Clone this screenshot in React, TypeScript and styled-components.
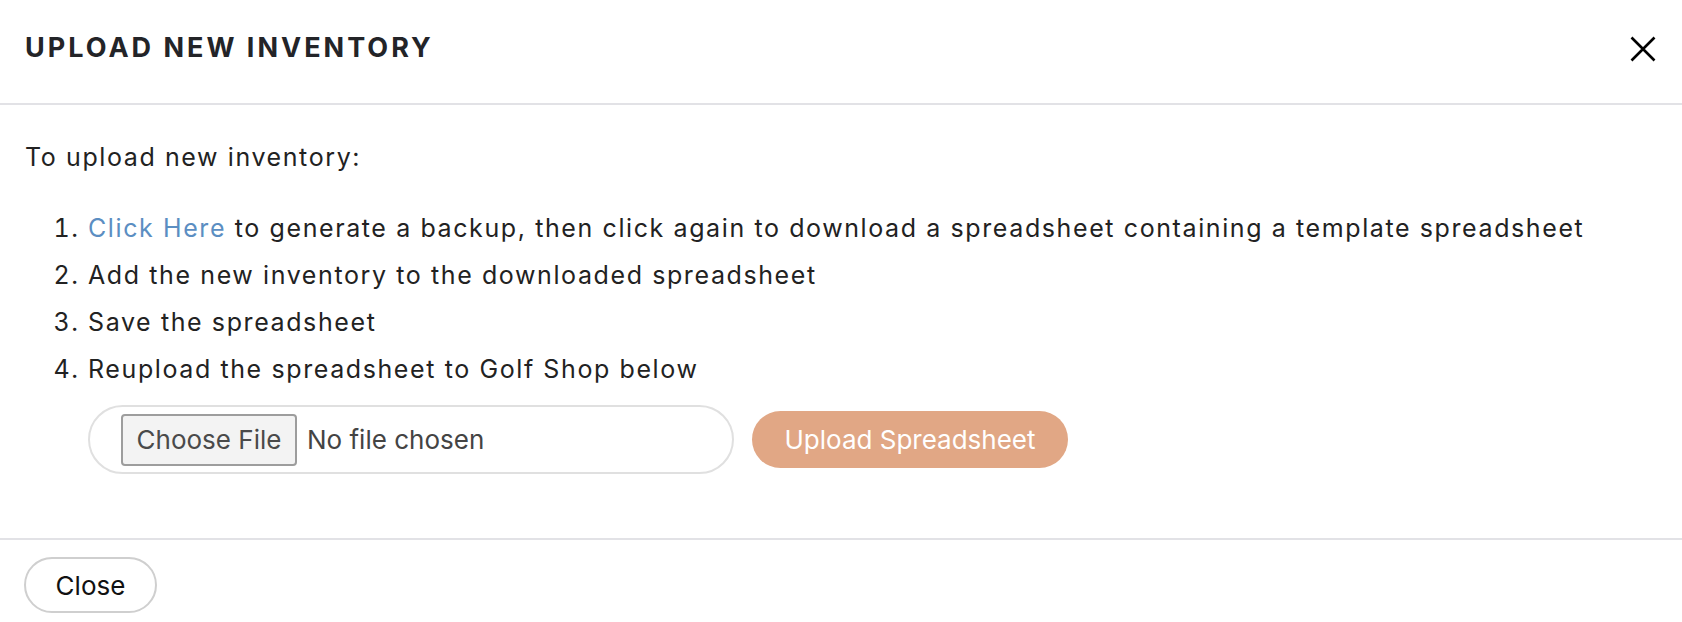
import React from "react";
import styled, { createGlobalStyle } from "styled-components";

const Global = createGlobalStyle`
  html, body { margin: 0; padding: 0; background: #fff; }
  body { font-family: "Inter", "Lato", sans-serif; color: #222; }
  * { box-sizing: border-box; }
`;

const Modal = styled.div`
  width: 100%;
  background: #fff;
`;

const Header = styled.header`
  height: 105px;
  display: flex;
  align-items: center;
  justify-content: space-between;
  padding: 0 26px 8px 25px;
  border-bottom: 2px solid #e2e2e6;
`;

const Title = styled.h1`
  margin: 0;
  font-size: 27px;
  font-weight: 700;
  letter-spacing: 3px;
  color: #232428;
  text-transform: uppercase;
`;

const CloseIcon = styled.button`
  width: 26px;
  height: 26px;
  padding: 0;
  border: 0;
  background: none;
  cursor: pointer;
  display: flex;
  margin-top: 2px;
`;

const Body = styled.section`
  padding: 29px 25px 64px;
  font-size: 25px;
  line-height: 47px;
  letter-spacing: 1.6px;
`;

const Intro = styled.p`
  margin: 0 0 24px;
`;

const Steps = styled.ol`
  margin: 0;
  padding-left: 63px;
`;

const Step = styled.li`
  padding-left: 0;
`;

const Link = styled.a`
  color: #5b8ec2;
  text-decoration: none;
`;

const UploadRow = styled.div`
  display: flex;
  align-items: center;
  gap: 18px;
  margin: 12px 0 0 63px;
`;

const FilePill = styled.div`
  width: 646px;
  height: 69px;
  border: 2px solid #e0e0e0;
  border-radius: 35px;
  display: flex;
  align-items: center;
  padding-left: 31px;
  gap: 10px;
`;

const FileButton = styled.button`
  width: 176px;
  height: 52px;
  background: #f3f3f3;
  border: 2px solid #9d9d9d;
  border-radius: 4px;
  font-family: inherit;
  font-size: 26px;
  color: #4a4a4a;
  letter-spacing: 0;
  padding: 0;
`;

const FileName = styled.span`
  font-size: 26px;
  line-height: 1;
  color: #444;
  letter-spacing: 0;
`;

const PrimaryButton = styled.button`
  width: 316px;
  height: 57px;
  border: 0;
  border-radius: 29px;
  background: #e1a785;
  color: #fff;
  font-family: inherit;
  font-size: 26px;
  letter-spacing: 0;
`;

const Footer = styled.footer`
  border-top: 2px solid #e2e2e6;
  padding: 17px 24px 9px;
`;

const SecondaryButton = styled.button`
  width: 133px;
  height: 56px;
  border: 2px solid #cfcfcf;
  border-radius: 28px;
  background: #fff;
  color: #111;
  font-family: inherit;
  font-size: 26px;
`;

export default function App() {
  return (
    <>
      <Global />
      <Modal>
        <Header>
          <Title>Upload New Inventory</Title>
          <CloseIcon aria-label="Close">
            <svg width="26" height="26" viewBox="0 0 26 26">
              <path d="M1.5 1.5 L24.5 24.5 M24.5 1.5 L1.5 24.5" stroke="#000" strokeWidth="2.6" fill="none" />
            </svg>
          </CloseIcon>
        </Header>
        <Body>
          <Intro>To upload new inventory:</Intro>
          <Steps>
            <Step>
              <Link href="#">Click Here</Link> to generate a backup, then click again to download a spreadsheet containing a template spreadsheet
            </Step>
            <Step>Add the new inventory to the downloaded spreadsheet</Step>
            <Step>Save the spreadsheet</Step>
            <Step>Reupload the spreadsheet to Golf Shop below</Step>
          </Steps>
          <UploadRow>
            <FilePill>
              <FileButton>Choose File</FileButton>
              <FileName>No file chosen</FileName>
            </FilePill>
            <PrimaryButton>Upload Spreadsheet</PrimaryButton>
          </UploadRow>
        </Body>
        <Footer>
          <SecondaryButton>Close</SecondaryButton>
        </Footer>
      </Modal>
    </>
  );
}
